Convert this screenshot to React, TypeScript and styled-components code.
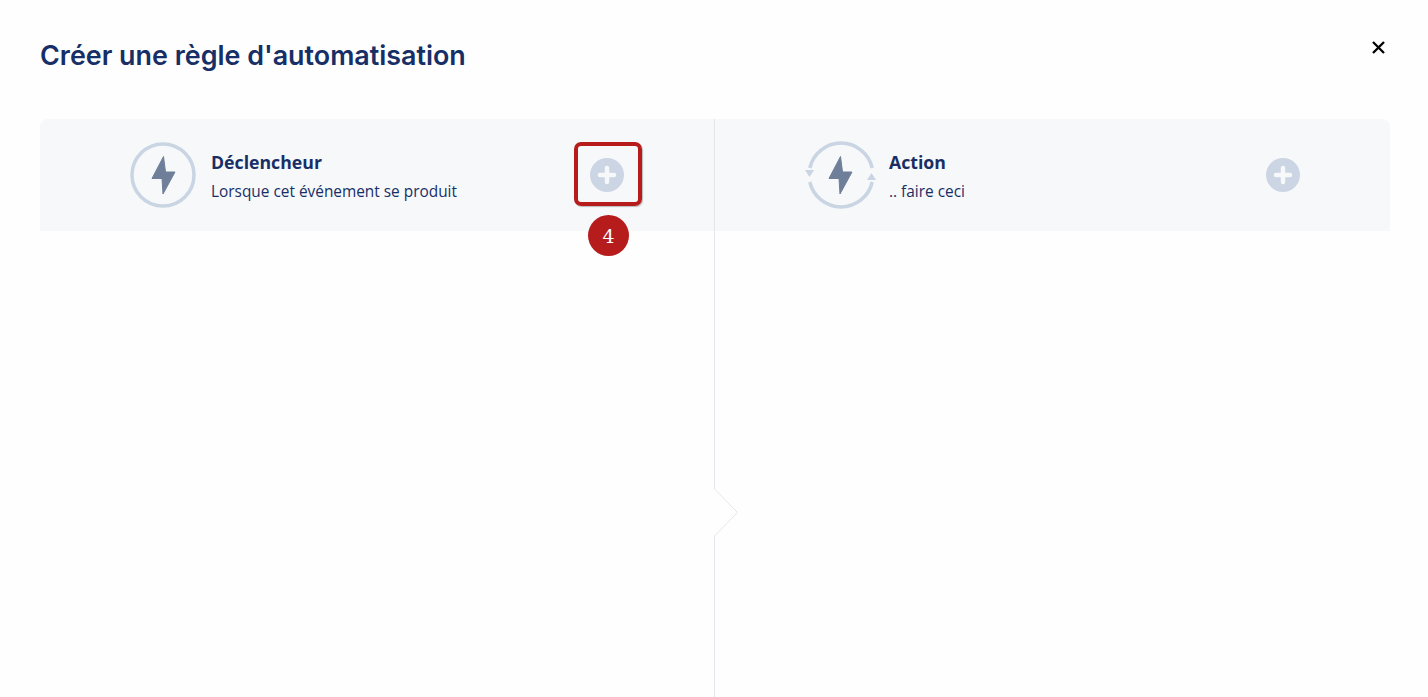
import React from "react";
import styled, { createGlobalStyle } from "styled-components";

const Global = createGlobalStyle`
  html, body { margin: 0; padding: 0; background: #fefefe; }
  body { font-family: "Open Sans", "Liberation Sans", sans-serif; overflow: hidden; }
`;

const Page = styled.div`
  height: 697px;
  display: flex;
  flex-direction: column;
  overflow: hidden;
`;

const Header = styled.header`
  height: 119px;
  flex: none;
  box-sizing: border-box;
  padding: 35px 43px 0 40px;
  display: flex;
  justify-content: space-between;
  align-items: flex-start;
`;

const Title = styled.h1`
  margin: 0;
  font: 600 26.88px/40px "Inter", sans-serif;
  color: #172f66;
`;

const Close = styled.button`
  border: 0;
  background: none;
  padding: 0;
  margin-top: 6px;
  width: 13px;
  height: 13px;
  display: flex;
`;

const Columns = styled.main`
  flex: 1;
  margin: 0 38px 0 40px;
  display: grid;
  grid-template-columns: 1fr 1fr;
  position: relative;
`;

const Column = styled.section<{ $divider?: boolean }>`
  border-right: ${(p) => (p.$divider ? "1px solid #e3e7ed" : "0")};
`;

const Band = styled.div<{ $side: "left" | "right" }>`
  height: 112px;
  box-sizing: border-box;
  padding: 0 90px;
  background: #f7f8fa;
  display: flex;
  align-items: center;
  border-radius: ${(p) => (p.$side === "left" ? "8px 0 0 0" : "0 8px 0 0")};
`;

const IconSlot = styled.div<{ $w: number; $gap: number }>`
  width: ${(p) => p.$w}px;
  margin-right: ${(p) => p.$gap}px;
  flex: none;
  display: flex;
`;

const Copy = styled.div`
  flex: 1;
  padding-top: 2px;
  color: #172f66;
`;

const Name = styled.div`
  font-size: 17.7px;
  line-height: 24px;
  font-weight: 700;
`;

const Hint = styled.div`
  font-size: 15.4px;
  line-height: 20px;
  margin-top: 8px;
`;

const PlusWrap = styled.div`
  position: relative;
  width: 34px;
  height: 34px;
  flex: none;
`;

const Highlight = styled.div`
  position: absolute;
  left: -16px;
  top: -16px;
  width: 68px;
  height: 64px;
  box-sizing: border-box;
  border: 4px solid #b71c1c;
  border-radius: 7px;
  box-shadow: 1px 1px 1px rgba(0, 0, 0, 0.25);
`;

const Badge = styled.div`
  position: absolute;
  left: -2px;
  top: 57px;
  width: 41px;
  height: 41px;
  border-radius: 50%;
  background: #b71c1c;
  color: #fff;
  font: 400 19px/42px "DejaVu Serif", serif;
  text-align: center;
`;

const Chevron = styled.svg`
  position: absolute;
  left: 674px;
  top: 370px;
`;

const Bolt = ({ x = 0, y = 0 }: { x?: number; y?: number }) => (
  <path
    transform={`translate(${x} ${y})`}
    d="M33.5 14.5 L22 36.5 H32 L33 52 L45 30 H35.5 Z"
    fill="#6f7f99"
    stroke="#6f7f99"
    strokeWidth="1"
    strokeLinejoin="round"
  />
);

const TriggerIcon = () => (
  <svg width="66" height="66" viewBox="0 0 66 66">
    <circle cx="33" cy="33" r="31" fill="none" stroke="#c9d5e3" strokeWidth="3.5" />
    <Bolt />
  </svg>
);

const ActionIcon = () => (
  <svg width="72" height="68" viewBox="0 0 72 68">
    <path d="M4.8 27 A32 32 0 0 1 67.2 27" fill="none" stroke="#c9d5e3" strokeWidth="3.5" />
    <path d="M4.8 41 A32 32 0 0 0 67.2 41" fill="none" stroke="#c9d5e3" strokeWidth="3.5" />
    <path d="M0 29 H9 L4.5 36 Z" fill="#c9d5e3" />
    <path d="M62 39 H71 L66.5 32 Z" fill="#c9d5e3" />
    <Bolt x={2} y={1} />
  </svg>
);

const PlusIcon = () => (
  <svg width="34" height="34" viewBox="0 0 34 34">
    <circle cx="17" cy="17" r="17" fill="#cbd5e3" />
    <path d="M17 10 V24 M10 17 H24" stroke="#f7f8fa" strokeWidth="4.5" strokeLinecap="round" />
  </svg>
);

export default function App() {
  return (
    <Page>
      <Global />
      <Header>
        <Title>Créer une règle d'automatisation</Title>
        <Close aria-label="Fermer">
          <svg width="13" height="13" viewBox="0 0 13 13">
            <path d="M1 1 L12 12 M12 1 L1 12" stroke="#000" strokeWidth="2.3" />
          </svg>
        </Close>
      </Header>
      <Columns>
        <Column $divider>
          <Band $side="left">
            <IconSlot $w={66} $gap={15}>
              <TriggerIcon />
            </IconSlot>
            <Copy>
              <Name>Déclencheur</Name>
              <Hint>Lorsque cet événement se produit</Hint>
            </Copy>
            <PlusWrap>
              <PlusIcon />
              <Highlight />
              <Badge>4</Badge>
            </PlusWrap>
          </Band>
        </Column>
        <Column>
          <Band $side="right">
            <IconSlot $w={72} $gap={12}>
              <ActionIcon />
            </IconSlot>
            <Copy>
              <Name>Action</Name>
              <Hint>.. faire ceci</Hint>
            </Copy>
            <PlusWrap>
              <PlusIcon />
            </PlusWrap>
          </Band>
        </Column>
        <Chevron width="26" height="48" viewBox="0 0 26 48">
          <path d="M0 0 H1 L23.5 23.5 L1 47 H0 Z" fill="#fefefe" />
          <path d="M0.5 0 L23.5 23.5 L0.5 47" fill="none" stroke="#e3e7ed" strokeWidth="1" />
        </Chevron>
      </Columns>
    </Page>
  );
}
